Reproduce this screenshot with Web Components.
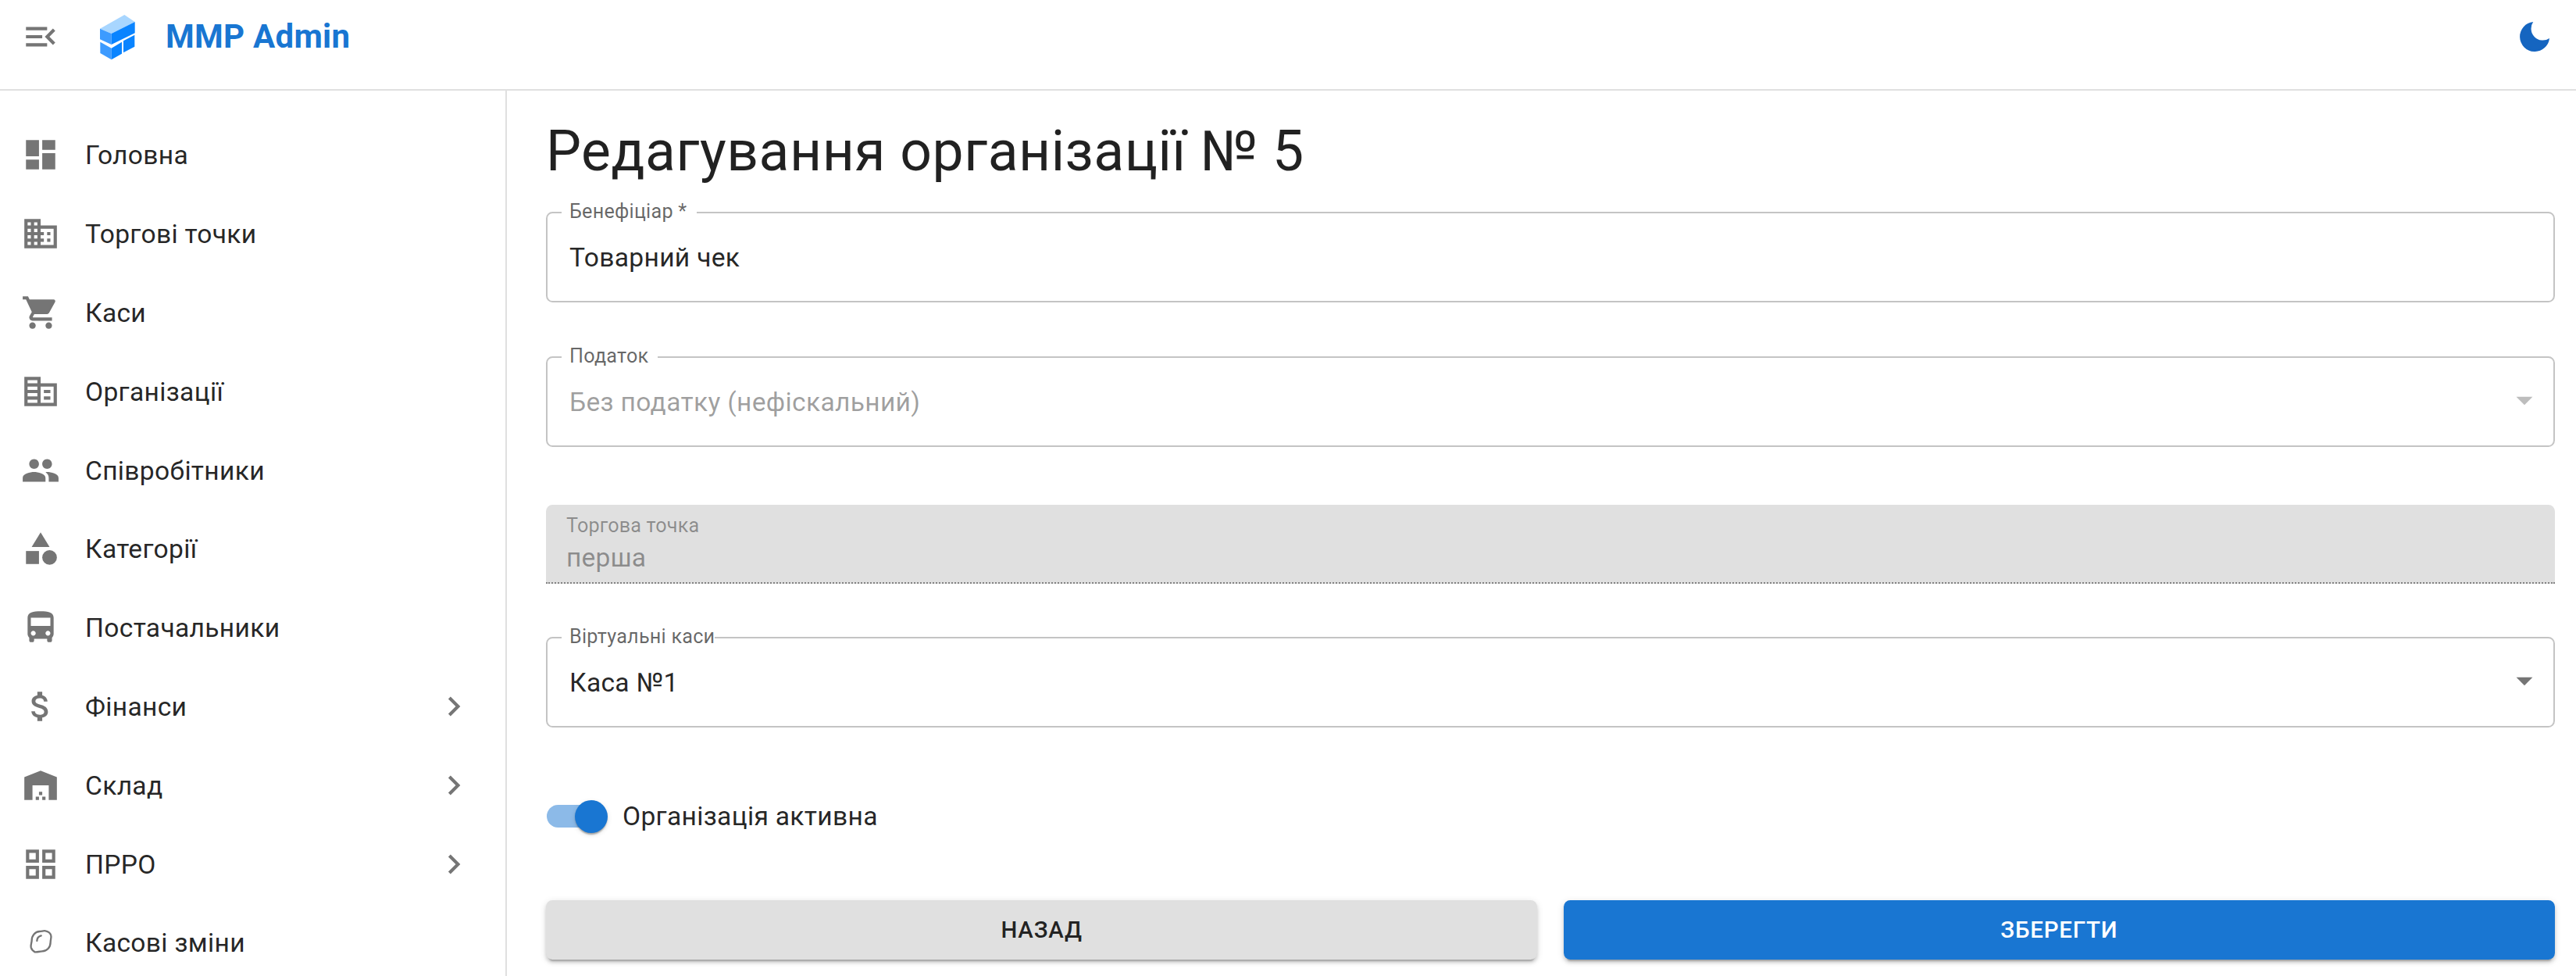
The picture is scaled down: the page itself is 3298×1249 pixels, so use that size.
<!DOCTYPE html>
<html lang="uk">
<head>
<meta charset="utf-8">
<title>MMP Admin</title>
<style>
html,body{margin:0;padding:0;height:100%;background:#fff;overflow:hidden}
body{font-family:Roboto,"Liberation Sans",sans-serif;color:rgba(0,0,0,.87)}
</style>
</head>
<body>
<x-shell>
  <x-topbar slot="top"></x-topbar>
  <x-sidenav slot="side">
    <x-nav-item icon="dashboard">Головна</x-nav-item>
    <x-nav-item icon="domain">Торгові точки</x-nav-item>
    <x-nav-item icon="cart">Каси</x-nav-item>
    <x-nav-item icon="corp">Організації</x-nav-item>
    <x-nav-item icon="people">Співробітники</x-nav-item>
    <x-nav-item icon="category">Категорії</x-nav-item>
    <x-nav-item icon="bus">Постачальники</x-nav-item>
    <x-nav-item icon="money" expand>Фінанси</x-nav-item>
    <x-nav-item icon="warehouse" expand>Склад</x-nav-item>
    <x-nav-item icon="grid" expand>ПРРО</x-nav-item>
    <x-nav-item icon="lemon">Касові зміни</x-nav-item>
  </x-sidenav>
  <x-form-page>
    <x-outlined-field label="Бенефіціар *" value="Товарний чек" notch="13" style="margin-top:0"></x-outlined-field>
    <x-outlined-field label="Податок" value="Без податку (нефіскальний)" notch="12" select disabled style="margin-top:69px"></x-outlined-field>
    <x-filled-field label="Торгова точка" value="перша" style="margin-top:74px"></x-filled-field>
    <x-outlined-field label="Віртуальні каси" value="Каса №1" notch="0" select style="margin-top:68px"></x-outlined-field>
    <x-switch-row style="margin-top:93px">Організація активна</x-switch-row>
    <x-button-row style="margin-top:86px">
      <x-action-button>НАЗАД</x-action-button>
      <x-action-button primary>ЗБЕРЕГТИ</x-action-button>
    </x-button-row>
  </x-form-page>
</x-shell>
<script>
const ICONS={
 menuopen:'<path d="M3 18h13v-2H3v2zm0-5h10v-2H3v2zm0-7v2h13V6H3zm18 9.59L17.42 12 21 8.41 19.59 7l-5 5 5 5L21 15.59z"/>',
 dashboard:'<path d="M3 13h8V3H3v10zm0 8h8v-6H3v6zm10 0h8V11h-8v10zm0-18v6h8V3h-8z"/>',
 domain:'<path d="M12 7V3H2v18h20V7H12zM6 19H4v-2h2v2zm0-4H4v-2h2v2zm0-4H4V9h2v2zm0-4H4V5h2v2zm4 12H8v-2h2v2zm0-4H8v-2h2v2zm0-4H8V9h2v2zm0-4H8V5h2v2zm10 12h-8v-2h2v-2h-2v-2h2v-2h-2V9h8v10zm-2-8h-2v2h2v-2zm0 4h-2v2h2v-2z"/>',
 cart:'<path d="M7 18c-1.1 0-1.99.9-1.99 2S5.9 22 7 22s2-.9 2-2-.9-2-2-2zM1 2v2h2l3.6 7.59-1.35 2.45c-.16.28-.25.61-.25.96 0 1.1.9 2 2 2h12v-2H7.42c-.14 0-.25-.11-.25-.25l.03-.12.9-1.63h7.45c.75 0 1.41-.41 1.75-1.03l3.58-6.49c.08-.14.12-.31.12-.48 0-.55-.45-1-1-1H5.21l-.94-2H1zm16 16c-1.1 0-1.99.9-1.99 2s.89 2 1.99 2 2-.9 2-2-.9-2-2-2z"/>',
 corp:'<path d="M12 7V3H2v18h20V7H12zm-2 12H4v-2h6v2zm0-4H4v-2h6v2zm0-4H4V9h6v2zm0-4H4V5h6v2zm10 12h-8V9h8v10zm-2-8h-4v2h4v-2zm0 4h-4v2h4v-2z"/>',
 people:'<path d="M16 11c1.66 0 2.99-1.34 2.99-3S17.66 5 16 5c-1.66 0-3 1.34-3 3s1.34 3 3 3zm-8 0c1.66 0 2.99-1.34 2.99-3S9.66 5 8 5C6.34 5 5 6.34 5 8s1.34 3 3 3zm0 2c-2.33 0-7 1.17-7 3.5V19h14v-2.5c0-2.33-4.67-3.5-7-3.5zm8 0c-.29 0-.62.02-.97.05 1.16.84 1.97 1.97 1.97 3.45V19h6v-2.5c0-2.33-4.67-3.5-7-3.5z"/>',
 category:'<path d="M12 2l-5.5 9h11z"/><circle cx="17.5" cy="17.5" r="4.5"/><path d="M3 13.5h8v8H3z"/>',
 bus:'<path d="M4 16c0 .88.39 1.67 1 2.22V20c0 .55.45 1 1 1h1c.55 0 1-.45 1-1v-1h8v1c0 .55.45 1 1 1h1c.55 0 1-.45 1-1v-1.78c.61-.55 1-1.34 1-2.22V6c0-3.5-3.58-4-8-4s-8 .5-8 4v10zm3.5 1c-.83 0-1.5-.67-1.5-1.5S6.67 14 7.5 14s1.5.67 1.5 1.5S8.33 17 7.5 17zm9 0c-.83 0-1.5-.67-1.5-1.5s.67-1.5 1.5-1.5 1.5.67 1.5 1.5-.67 1.5-1.5 1.5zm1.5-6H6V6h12v5z"/>',
 money:'<path d="M11.8 10.9c-2.27-.59-3-1.2-3-2.15 0-1.09 1.01-1.85 2.7-1.85 1.78 0 2.44.85 2.5 2.1h2.21c-.07-1.72-1.12-3.3-3.21-3.81V3h-3v2.16c-1.94.42-3.5 1.68-3.5 3.61 0 2.31 1.91 3.46 4.7 4.13 2.5.6 3 1.48 3 2.41 0 .69-.49 1.79-2.7 1.79-2.06 0-2.87-.92-2.98-2.1h-2.2c.12 2.19 1.76 3.42 3.68 3.83V21h3v-2.15c1.95-.37 3.5-1.5 3.5-3.55 0-2.84-2.43-3.81-4.7-4.4z"/>',
 warehouse:'<path d="M22 21V7L12 3 2 7v14h5v-9h10v9h5zm-11-2H9v2h2v-2zm2-3h-2v2h2v-2zm2 3h-2v2h2v-2z"/>',
 grid:'<path d="M3 3v8h8V3H3zm6 6H5V5h4v4zm-6 4v8h8v-8H3zm6 6H5v-4h4v4zm4-16v8h8V3h-8zm6 6h-4V5h4v4zm-6 4v8h8v-8h-8zm6 6h-4v-4h4v4z"/>',
 chevron:'<path d="M10 6L8.59 7.41 13.17 12l-4.58 4.59L10 18l6-6z"/>',
 drop:'<path d="M7 10l5 5 5-5z"/>'
};
const LEMON='<svg viewBox="0 0 132 132" width="44" height="44" fill="none" stroke="#757575" stroke-width="7" stroke-linecap="round"><path d="M85 22C78 20 70 24 62 24 45 24 32 40 32 58 32 68 27 76 29 85 31 93 35 99 44 103 52 105 60 100 72 100 90 100 104 85 104 65 104 55 108 48 106 40 104 31 94 24 85 22Z"/><path d="M52 60C52 50 58 43 68 40"/></svg>';
const svg=(n,s,c)=>`<svg viewBox="0 0 24 24" width="${s}" height="${s}" fill="${c}" aria-hidden="true">${ICONS[n]}</svg>`;
function def(name,cls){customElements.define(name,cls)}
class Base extends HTMLElement{
  render(html){(this.shadowRoot||this.attachShadow({mode:'open'})).innerHTML=html}
}
def('x-shell',class extends Base{connectedCallback(){this.render(`<style>
:host{display:grid;grid-template-columns:649px 1fr;grid-template-rows:116px 1fr;height:1249px;width:3298px;overflow:hidden;box-sizing:border-box}
.top{grid-column:1/3}
.side{min-height:0;overflow:hidden}
</style><div class="top"><slot name="top"></slot></div><div class="side"><slot name="side"></slot></div><slot></slot>`)}});
def('x-topbar',class extends Base{connectedCallback(){this.render(`<style>
:host{display:flex;align-items:center;height:116px;box-sizing:border-box;border-bottom:2px solid #e0e0e0;padding:0 34px 20px 27px;background:#fff}
.menu{display:flex;width:50px;height:50px}
.logo{display:flex;width:64px;height:70px;margin-top:2px;margin-right:28px;margin-left:43px}
.title{font-size:42px;font-weight:700;color:#1976d2;line-height:50px;letter-spacing:.25px}
.sp{flex:1}
.moon{display:flex;width:38px;height:38px}
</style>
<span class="menu">${svg('menuopen',50,'#757575')}</span>
<span class="logo"><svg viewBox="0 0 192 210" width="64" height="70">
<path fill="#a8d6ff" d="M24 71L118 18 158 45 68 90z"/>
<path fill="#3d9bff" d="M24 71L68 90V132L24 112z"/>
<path fill="#0a84ff" d="M68 90L158 45V88L68 132z"/>
<path fill="#3d9bff" d="M25 122L68 146V190L25 165z"/>
<path fill="#0a84ff" d="M68 146L108 122V167L68 190z"/>
<path fill="#0a84ff" d="M114 118L157 95V140L114 163z"/>
</svg></span>
<span class="title">MMP Admin</span><span class="sp"></span>
<span class="moon"><svg viewBox="0 0 38 38" width="38" height="38"><path fill="#1565c0" d="M17.2.1A19 19 0 1 0 38 21a15 15 0 0 1-20.8-20.9z"/></svg></span>`)}});
def('x-sidenav',class extends Base{connectedCallback(){this.render(`<style>
:host{display:block;box-sizing:border-box;height:1133px;border-right:2px solid #e0e0e0;padding-top:32px;overflow:hidden}
</style><slot></slot>`)}});
def('x-nav-item',class extends Base{connectedCallback(){
 const n=this.getAttribute('icon');
 const ic=n==='lemon'?LEMON:svg(n,50,'#757575');
 this.render(`<style>
:host{display:flex;align-items:center;height:100.8px;font-size:33.6px;line-height:50px;letter-spacing:.00938em;color:rgba(0,0,0,.87);box-sizing:border-box;padding-left:27px}
.i{display:flex;align-items:center;justify-content:center;width:50px;height:50px;margin-right:32px;flex:none}
.t{flex:1;padding-top:2px}
.c{display:flex;margin-right:41px}
</style><span class="i">${ic}</span><span class="t"><slot></slot></span>${this.hasAttribute('expand')?`<span class="c">${svg('chevron',50,'#757575')}</span>`:''}`)
}});
def('x-form-page',class extends Base{connectedCallback(){this.render(`<style>
:host{display:block;box-sizing:border-box;padding:0 27px 0 50px;min-width:0}
h1{margin:0;font-size:71.4px;font-weight:400;letter-spacing:.00735em;line-height:82px;color:rgba(0,0,0,.87);padding-top:37px;height:155px;box-sizing:border-box}
</style><h1>Редагування організації № 5</h1><slot></slot>`)}});
def('x-outlined-field',class extends Base{connectedCallback(){
 const dis=this.hasAttribute('disabled'),sel=this.hasAttribute('select');
 const nt=this.getAttribute('notch')||0;
 this.render(`<style>
:host{display:block;position:relative;height:116px;box-sizing:border-box;border:2px solid #c4c4c4;border-radius:8.4px;background:#fff}
.lab{position:absolute;left:18px;top:-17px;padding:0 ${nt}px 0 10px;background:#fff;font-size:25.2px;line-height:30px;letter-spacing:.00938em;color:rgba(0,0,0,.6);white-space:nowrap}
.val{display:flex;align-items:center;height:100%;padding:2px 28px 0;box-sizing:border-box;font-size:33.6px;line-height:40px;letter-spacing:.00938em;color:${dis?'rgba(0,0,0,.38)':'rgba(0,0,0,.87)'}}
.dd{position:absolute;right:12px;top:29px;display:flex}
</style><span class="lab">${this.getAttribute('label')}</span><div class="val">${this.getAttribute('value')}</div>${sel?`<span class="dd">${svg('drop',50,dis?'rgba(0,0,0,.26)':'rgba(0,0,0,.54)')}</span>`:''}`)
}});
def('x-filled-field',class extends Base{connectedCallback(){this.render(`<style>
:host{display:flex;flex-direction:column;height:101px;box-sizing:border-box;background:#e0e0e0;border-radius:8.4px 8.4px 0 0;border-bottom:2px dotted rgba(0,0,0,.42);padding:12px 26px 0;color:rgba(0,0,0,.38);letter-spacing:.00938em}
.lab{font-size:25.2px;line-height:30px}
.val{font-size:33.6px;line-height:40px;margin-top:6px}
</style><span class="lab">${this.getAttribute('label')}</span><span class="val">${this.getAttribute('value')}</span>`)}});
def('x-switch-row',class extends Base{connectedCallback(){this.render(`<style>
:host{display:flex;align-items:center;height:42px;font-size:33.6px;line-height:42px;letter-spacing:.00938em;color:rgba(0,0,0,.87)}
.sw{position:relative;width:79px;height:42px;margin-right:19px;flex:none}
.track{position:absolute;left:1px;top:6px;width:71px;height:29px;border-radius:15px;background:#1976d2;opacity:.5}
.thumb{position:absolute;right:0;top:0;width:42px;height:42px;border-radius:50%;background:#1976d2;box-shadow:0 4px 2px -2px rgba(0,0,0,.2),0 2px 2px 0 rgba(0,0,0,.14),0 2px 6px 0 rgba(0,0,0,.12)}
</style><span class="sw"><span class="track"></span><span class="thumb"></span></span><span><slot></slot></span>`)}});
def('x-button-row',class extends Base{connectedCallback(){this.render(`<style>
:host{display:grid;grid-template-columns:1fr 1fr;gap:33.6px}
</style><slot></slot>`)}});
def('x-action-button',class extends Base{connectedCallback(){const p=this.hasAttribute('primary');this.render(`<style>
:host{display:flex;align-items:center;justify-content:center;height:76px;border-radius:8.4px;font-size:29.4px;font-weight:500;letter-spacing:.02857em;background:${p?'#1976d2':'#e0e0e0'};color:${p?'#fff':'rgba(0,0,0,.87)'};box-shadow:0 6px 2px -4px rgba(0,0,0,.2),0 4px 4px 0 rgba(0,0,0,.14),0 2px 10px 0 rgba(0,0,0,.12)}
</style><slot></slot>`)}});
</script>
</body>
</html>
